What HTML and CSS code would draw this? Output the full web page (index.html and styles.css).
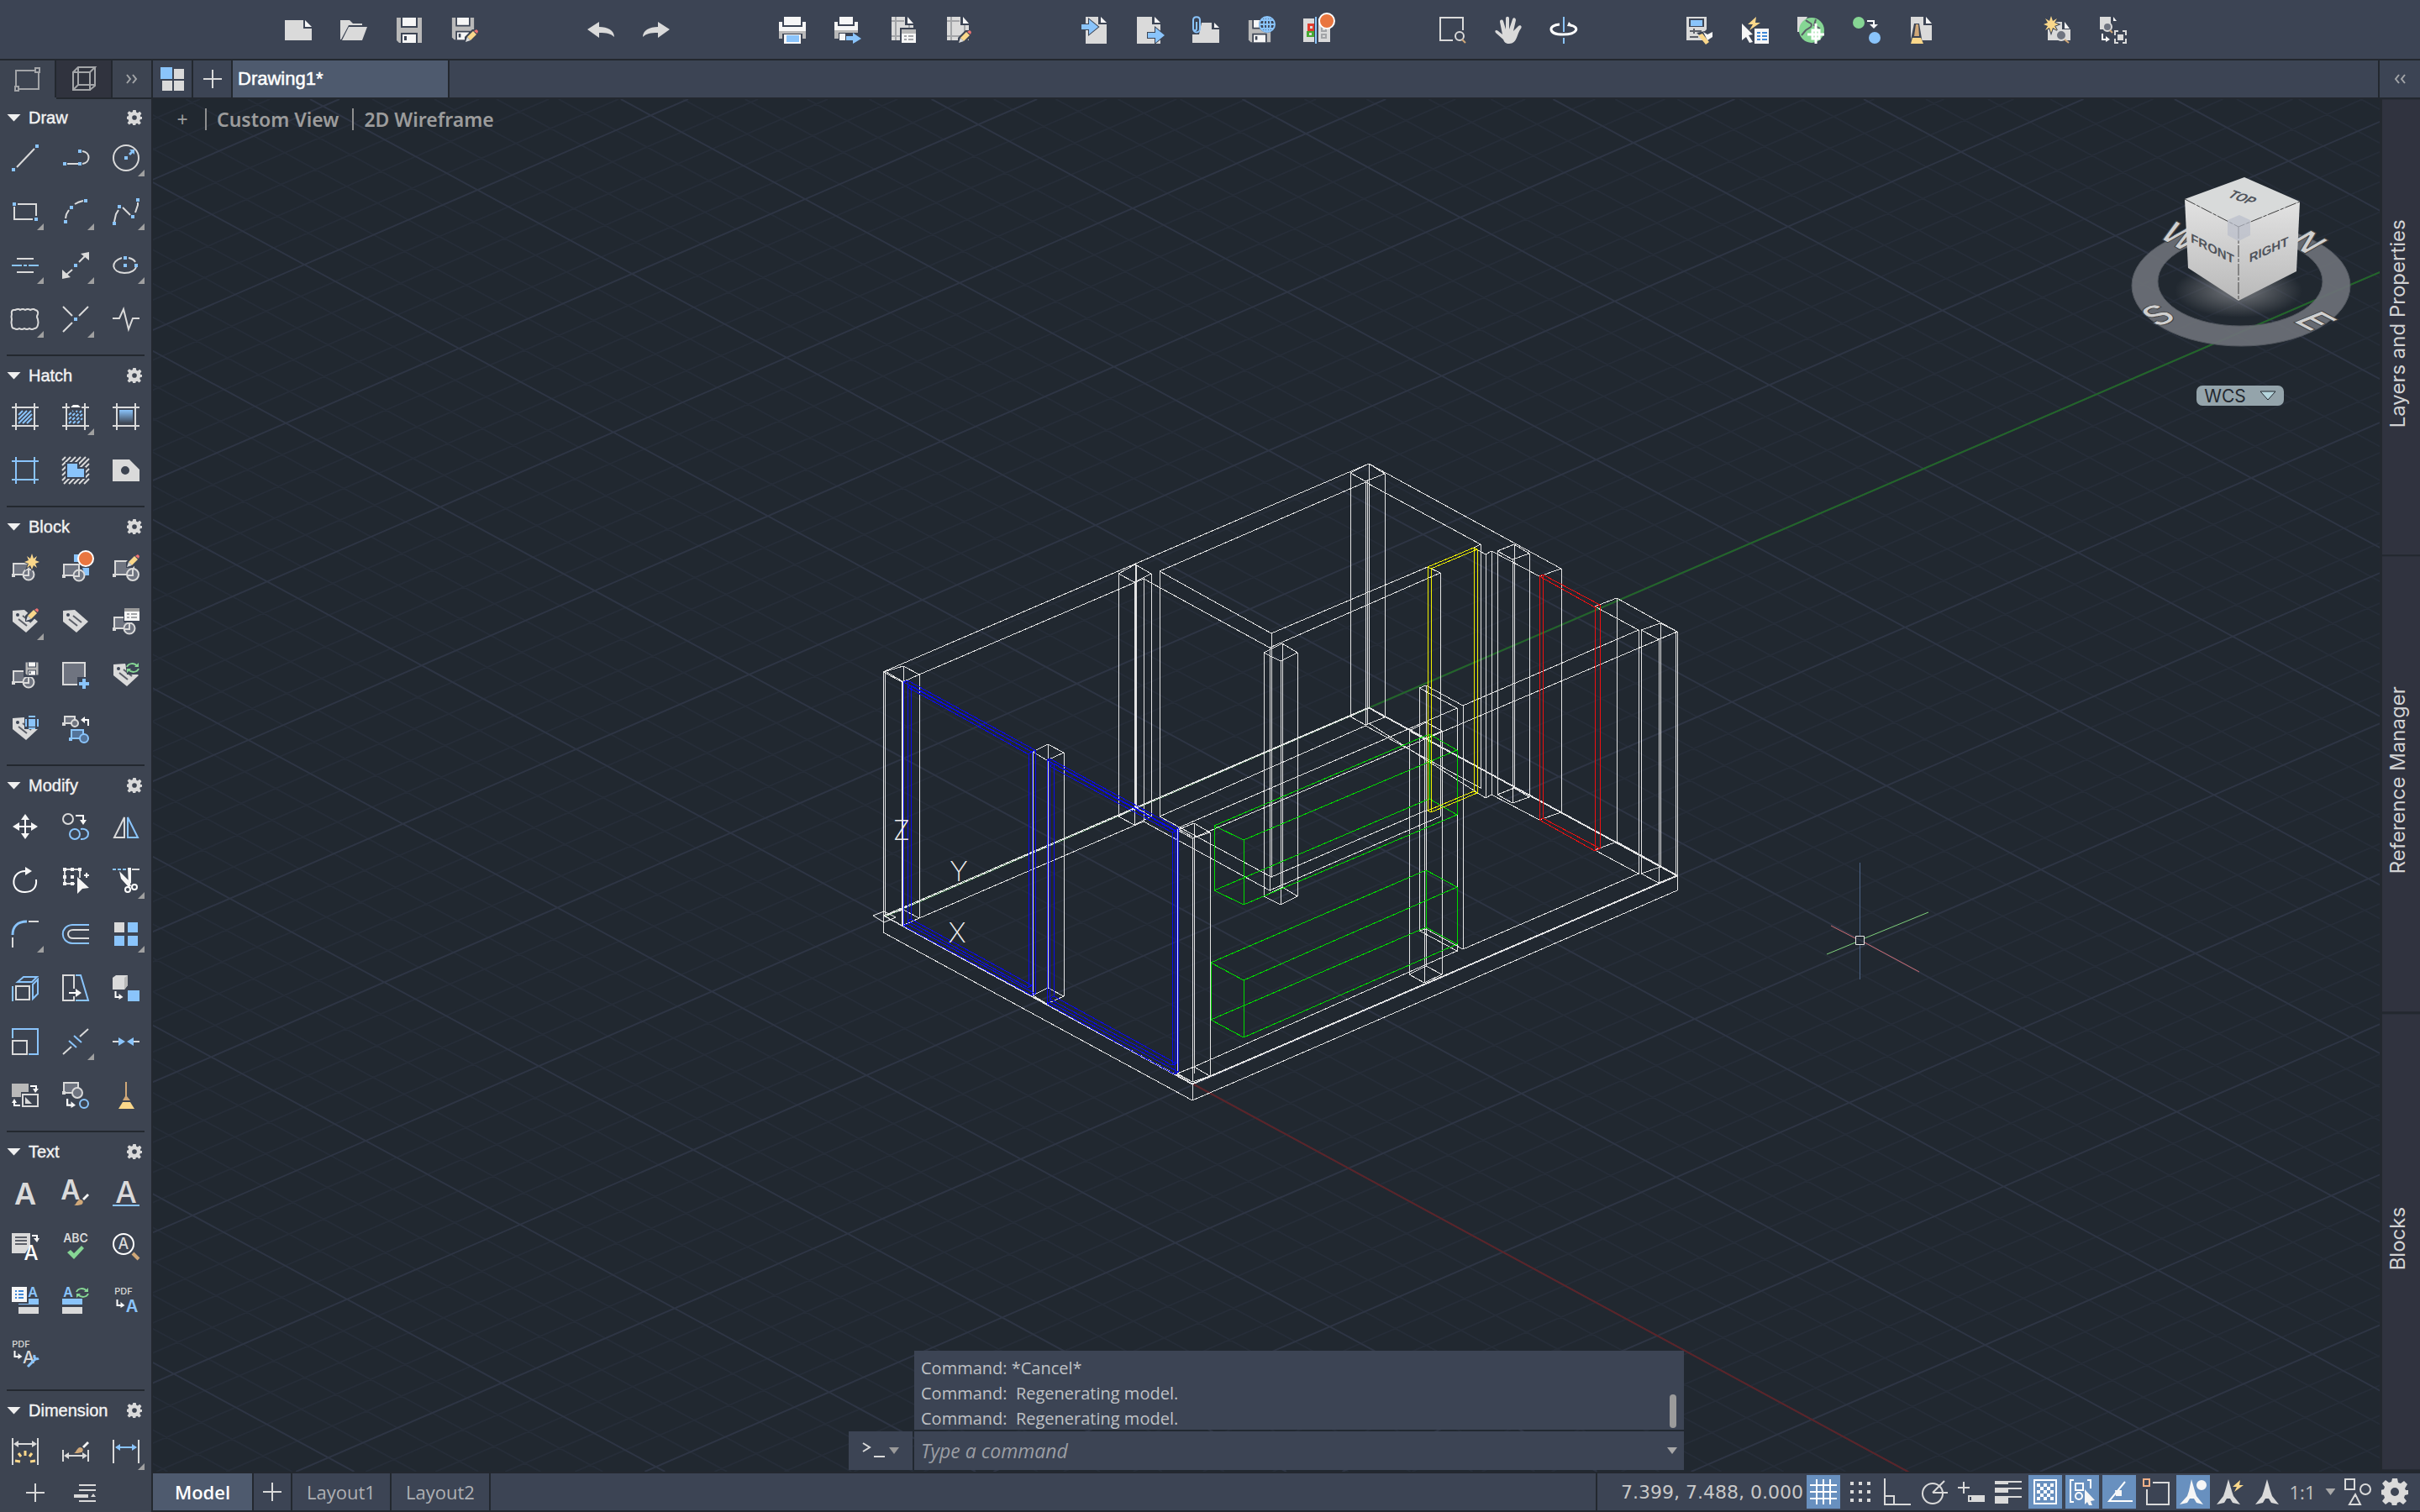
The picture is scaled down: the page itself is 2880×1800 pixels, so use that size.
FILE: index.html
```html
<!DOCTYPE html>
<html lang="en">
<head>
<meta charset="utf-8">
<title>Drawing1*</title>
<link rel="stylesheet" href="styles.css">
</head>
<body>
<svg class="defs" aria-hidden="true">
  <defs>
    <linearGradient id="gradFade" x1="0" y1="0" x2="0" y2="1"><stop offset="0" stop-color="#8ac4fb"/><stop offset="1" stop-color="#3d4451"/></linearGradient>
    <linearGradient id="faceFade" x1="0" y1="0" x2="0" y2="1"><stop offset="0" stop-color="#e2e2e2"/><stop offset="1" stop-color="#b9b9b9"/></linearGradient>
    <radialGradient id="glow"><stop offset="0" stop-color="#8a8c90" stop-opacity=".8"/><stop offset="1" stop-color="#8a8c90" stop-opacity="0"/></radialGradient>
    <symbol id="gear" viewBox="0 0 32 32"><path class="f" fill-rule="evenodd" d="M13 0h6l1 5 3 1 4-3 4 4-3 5 1 2 3 0v5l-4 1-1 3 3 4-4 4-4-3-3 1-1 4h-5l-1-4-3-1-4 3-4-4 3-4-1-3-4-1v-5l4-1 1-3-3-4 4-4 4 3 3-1zM16 11a5 5 0 1 0 0 10a5 5 0 1 0 0-10z"/></symbol>
    <symbol id="blk" viewBox="0 0 32 32"><path class="s fd" d="M2 11h18v13H2z"/><circle class="s fd" cx="20" cy="24" r="6.500"/><path class="s" d="M20 17v8h-6"/><path class="f" d="M0 23h4v4H0z"/></symbol>
    <symbol id="tag" viewBox="0 0 32 32"><path class="f" d="M1 3l14-1 16 14-14 13L1 16z"/><circle class="fk" cx="7" cy="8" r="2"/><path class="sk" d="M13 9l10 8M8 13l10 8"/></symbol>
    <symbol id="pencil" viewBox="0 0 16 16"><path class="fk" d="M0 17V9L10-1l5 1 2 6L7 17z"/><path class="fy" d="M3 9l7-7 4 4-7 7z"/><path class="f" d="M3 9l4 4-6 2z"/><path class="fr" d="M11 2l3-2 2 2-1 3z"/></symbol>
    <symbol id="floppy" viewBox="0 0 32 32"><path class="fg2" d="M1 1h30v30H4l-3-3z"/><path class="fk" d="M6 1h20v12H6zM6 19h20v12H6z"/><path class="fw" d="M8 1h16v10H8zM8 21h16v10H8z"/><path class="fk" d="M10 23h3v5h-3z"/></symbol>
    <symbol id="sheet" viewBox="0 0 32 32"><path class="f" d="M3 0h15v10h10v18H3z"/><path class="fw" d="M21 0l7 8h-7z"/></symbol>
    <symbol id="plan" viewBox="0 0 32 32"><path class="f" d="M2 0h16v10h10v18H2z"/><path class="fw" d="M21 0l7 8h-7z"/><path class="sg" d="M7 0v28M2 5h15M2 23h26M23 10v18"/></symbol>
    <symbol id="sync" viewBox="0 0 16 12"><path class="sgr" d="M1 5c2-5 9-5 12-1M15 7c-2 5-9 5-12 1"/><path class="fg" d="M15 0v5h-5zM1 12V7h5z"/></symbol>
    <symbol id="brush" viewBox="0 0 18 14"><path class="fw" d="M10 6l6-6 2 2-6 6z"/><path class="ft" d="M0 14c3-1 3-6 7-7 4 0 5 4 2 6-3 1-6 1-9 1z"/></symbol>
    <symbol id="corner" viewBox="0 0 10 10"><path class="sw" d="M1 0v7h5"/><path class="fw" d="M5 3l5 4-5 3z"/></symbol>
    <symbol id="needle" viewBox="0 0 32 32"><path class="f" d="M16 1l4 14 2 6 8 10-9-2-3-5h-4l-3 5-9 2 8-10 2-6z"/></symbol>
  </defs>
</svg>

<div class="app">
  <header class="toolbar" role="toolbar" aria-label="Standard">
    <div class="group">
      <button class="tool" aria-label="New"><svg class="icon" viewBox="0 0 32 32"><path class="f" d="M0 4h22v10h10v14H0z"/><path class="fw" d="M24 4l8 8h-8z"/></svg></button>
      <button class="tool" aria-label="Open"><svg class="icon" viewBox="0 0 32 32"><path class="f" d="M0 4h11l4 4h11v2H10L1 27H0z"/><path class="f" d="M10 12h22l-6 16H2z"/></svg></button>
      <button class="tool" aria-label="Save"><svg class="icon" viewBox="0 0 32 32"><use href="#floppy"/></svg></button>
      <button class="tool" aria-label="Save As"><svg class="icon" viewBox="0 0 32 32"><use href="#floppy" width="28" height="28"/><use href="#pencil" x="16" y="15" width="16" height="16"/></svg></button>
    </div>
    <div class="group">
      <button class="tool" aria-label="Undo"><svg class="icon" viewBox="0 0 32 32"><path class="f" d="M0 15L14 6v6c10 0 18 4 18 12-4-4-9-5-18-5v6z"/></svg></button>
      <button class="tool" aria-label="Redo"><svg class="icon" viewBox="0 0 32 32"><path class="f" d="M32 15L18 6v6C8 12 0 16 0 24c4-4 9-5 18-5v6z"/></svg></button>
    </div>
    <div class="group">
      <button class="tool" aria-label="Print"><svg class="icon" viewBox="0 0 32 32"><path class="fw" d="M6 0h20v10H6z"/><path class="fw" d="M0 6h4v6h24V6h4v11H0z"/><path class="fg2" d="M0 17h32v9h-4v-6H4v6H0z"/><path class="fw" d="M6 21h20v11H6z"/><path class="fb" d="M9 22h15v8H9z"/></svg></button>
      <button class="tool" aria-label="Export to PDF"><svg class="icon" viewBox="0 0 32 32"><path class="fw" d="M6 0h16v9H6zM0 6h4v5h20V6h4v10H0z"/><path class="fg2" d="M0 16h28v3H5v7H0z"/><path class="fw" d="M6 20h7v8H6z"/><path class="fb" d="M14 23h8v-4l10 7-10 6v-4h-8z"/></svg></button>
      <button class="tool" aria-label="Page Setup"><svg class="icon" viewBox="0 0 32 32"><use href="#plan"/><path class="fk" d="M12 13h20v19H12z"/><path class="fg2" d="M14 15h17v5H14z"/><path class="fw" d="M14 20h17v11H14z"/><path class="sg" d="M17 23h3M22 23h6M17 27h3M22 27h6"/></svg></button>
      <button class="tool" aria-label="Edit Layout"><svg class="icon" viewBox="0 0 32 32"><use href="#plan"/><use href="#pencil" x="15" y="16" width="16" height="16"/></svg></button>
    </div>
    <div class="group">
      <button class="tool" aria-label="Import"><svg class="icon" viewBox="0 0 32 32"><g transform="translate(2 0)"><path class="f" d="M3 0h15v9h10v23H3z"/><path class="fw" d="M21 0l7 7h-7z"/></g><path class="fb ko" d="M0 9h9V3l11 9-11 9v-6H0z"/></svg></button>
      <button class="tool" aria-label="Export"><svg class="icon" viewBox="0 0 32 32"><path class="f" d="M0 0h18v9h10v23H0z"/><path class="fw" d="M21 0l7 7h-7z"/><path class="fb ko" d="M13 19h9v-6l11 9-11 9v-6h-9z"/></svg></button>
      <button class="tool" aria-label="Attach"><svg class="icon" viewBox="0 0 32 32"><path class="f" d="M11 7h12v8h9v16H0V21h8z"/><path class="fw" d="M26 7l6 6h-6z"/><path class="sb" d="M5 6v8c0 3-4 3-4 0V4c0-5 8-5 8 0v10c0 6-8 6-8 0"/></svg></button>
      <button class="tool" aria-label="Save to Web"><svg class="icon" viewBox="0 0 32 32"><use href="#floppy" y="3" width="28" height="28"/><circle class="fk" cx="23" cy="9" r="10"/><path class="sb" d="M14 9a9 9 0 1 0 18 0a9 9 0 1 0-18 0zM14 9h18M23 0v18M16 4h14M16 14h14M19 9a4 9 0 1 0 8 0a4 9 0 1 0-8 0"/></svg></button>
      <button class="tool" aria-label="Compare Drawings"><svg class="icon" viewBox="0 0 32 32"><path class="f" d="M0 2h13v28H0zM18 2h6v8h8v20H18z"/><path class="fred" d="M5 8h8v9H5z"/><path class="fgreen" d="M4 17h9v7H4z"/><path class="f" d="M8 11h3v3H8zM7 19h3v3H7z"/><path class="sg" d="M22 13h5v4h-5zM22 21h5v4h-5z"/><path class="sb" d="M15 0v32"/></svg><span class="badge"></span></button>
    </div>
    <div class="group">
      <button class="tool" aria-label="Zoom Window"><svg class="icon" viewBox="0 0 32 32"><path class="s" d="M16 28H1V1h27v15"/><circle class="s" cx="24" cy="23" r="5"/><path class="st" d="M27 27l4 4"/></svg></button>
      <button class="tool" aria-label="Pan"><svg class="icon" viewBox="0 0 32 32"><path class="f" d="M10 27L1 19c-2-3 1-4 3-2l5 4L6 6c0-3 3-3 4-1l3 10V2c0-3 4-3 4 0v13l4-12c1-3 4-2 4 1l-3 13 6-6c2-2 5 0 3 3-5 6-4 18-14 18-4 0-6-2-7-5z"/></svg></button>
      <button class="tool" aria-label="Orbit"><svg class="icon" viewBox="0 0 32 32"><path class="sb" d="M16 0v18M16 25v7"/><path class="sw3" d="M11 9C-3 10-3 21 15 21C33 21 35 12 24 10"/><path class="fw" d="M20 11l2-5 6 6z"/></svg></button>
    </div>
    <div class="group">
      <button class="tool" aria-label="Quick Measure"><svg class="icon" viewBox="0 0 32 32"><path class="f" d="M0 0h24v28H0z"/><path class="fk" d="M3 2h18v10H3z"/><path class="fb" d="M5 4h14v7H5z"/><path class="sk" d="M4 17h14M4 24h10M9 14v6"/><path class="fk" d="M12 19l10-2 2-2 8 2v12l-6 3z"/><path class="fy" d="M14 22l5-2 8 10-4 3z"/><path class="fw" d="M20 18l5 3 6-3v6l-6 4z"/></svg></button>
      <button class="tool" aria-label="Quick Select"><svg class="icon" viewBox="0 0 32 32"><path class="fy" d="M17 0L7 9h6l-4 7 13-9h-6z"/><path class="fw" d="M0 8l13 13-5 1 5 8-4 1-4-7-5 4z"/><path class="fw" d="M15 14h17v18H15z"/><path class="sblu" d="M18 19h4M24 19h6M18 23h4M24 23h6M18 27h4M24 27h6"/></svg></button>
      <button class="tool" aria-label="Geolocation"><svg class="icon" viewBox="0 0 32 32"><path class="f" d="M0 0h12L2 18H0z"/><circle class="fg" cx="17" cy="16" r="15"/><path class="sk" d="M10 4c4 4 9 3 6 8l-6 4-5 6M22 3l-2 7 7 4"/><path class="sw3" d="M22 8v24M12 21h20M18 16v10h8V16z"/></svg></button>
      <button class="tool" aria-label="Convert"><svg class="icon" viewBox="0 0 32 32"><circle class="fg" cx="7" cy="7" r="7"/><circle class="fb" cx="26" cy="25" r="7"/><path class="sw" d="M17 5h8v6"/><path class="fw" d="M20 9h10l-5 5z"/></svg></button>
      <button class="tool" aria-label="Purge"><svg class="icon" viewBox="0 0 32 32"><use href="#sheet"/><path class="fk" d="M7 8h6l4 24H2z"/><path class="ft" d="M9 9h3l1 14H7z"/><path class="fy" d="M5 25h10l3 7H3z"/></svg></button>
    </div>
    <div class="group">
      <button class="tool" aria-label="Find New"><svg class="icon" viewBox="0 0 32 32"><path class="f" d="M4 6h17v9h10v13H4z"/><path class="fw" d="M24 6l6 8h-6z"/><path class="fy ko" d="M8-1l2 6 5-3-3 5 5 2-5 2 3 5-5-3-2 6-2-6-5 3 3-5-5-2 5-2-3-5 5 3z"/><circle class="s fd" cx="20" cy="22" r="6"/><path class="st" d="M24 27l5 4"/></svg></button>
      <button class="tool" aria-label="Find Blocks"><svg class="icon" viewBox="0 0 32 32"><path class="f" d="M0 0h13v15H0z"/><path class="fw" d="M16 0l4 5h-4z"/><circle class="s fd" cx="9" cy="12" r="5"/><path class="st" d="M12 16l3 3"/><use href="#corner" x="2" y="20" width="10" height="10"/><path class="s" d="M18 22v-5h4M27 17h4v5M31 26v5h-4M22 31h-4v-5"/><path class="f" d="M21 21h7v7h-7z"/></svg></button>
    </div>
  </header>

  <aside class="palette">
    <div class="palette-tabs">
      <button class="ptab" aria-label="Drafting"><svg class="icon" viewBox="0 0 32 32"><path class="sg" d="M2 25V6h24M29 8v20H5"/><path class="sg" d="M25 3h5v5h-5zM1 25h4v5H1z"/></svg></button>
      <button class="ptab dark" aria-label="Modeling"><svg class="icon" viewBox="0 0 32 32"><path class="sg" d="M3 8h20v21H3zM3 8l6-6h20l-6 6M29 2v22l-6 5M9 2v21M9 23h20M9 23l-6 6"/></svg></button>
      <button class="ptab narrow" aria-label="More"><svg class="chev" viewBox="0 0 14 12"><path class="sg" d="M1 1l4 5-4 5M8 1l4 5-4 5"/></svg></button>
    </div>
    <div class="sections">
      <section class="section">
        <h2 class="head"><button class="fold"><span class="tri"></span>Draw</button><button class="cog" aria-label="Draw options"><svg viewBox="0 0 32 32"><use href="#gear"/></svg></button></h2>
        <div class="grid">
          <button class="tool" aria-label="Line"><svg class="icon" viewBox="0 0 32 32"><path class="s" d="M6 27L27 5"/><path class="fb" d="M0 28h4v4H0zM28 0h4v4h-4z"/></svg></button>
          <button class="tool" aria-label="Polyline"><svg class="icon" viewBox="0 0 32 32"><path class="s" d="M6 23h13M24 8c10 1 10 14 0 15"/><path class="fb" d="M1 21h4v4H1zM19 21h4v4h-4zM19 6h4v4h-4z"/></svg></button>
          <button class="tool fly" aria-label="Circle"><svg class="icon" viewBox="0 0 32 32"><circle class="s" cx="16" cy="16" r="15"/><path class="fb" d="M14 14h4v4h-4zM20 6h6v6l-2-2-3 3-2-2 3-3z"/></svg></button>
          <button class="tool fly" aria-label="Rectangle"><svg class="icon" viewBox="0 0 32 32"><path class="s" d="M7 7h22v14M25 25H3V10"/><path class="fb" d="M1 5h4v4H1zM27 23h4v4h-4z"/></svg></button>
          <button class="tool fly" aria-label="Arc"><svg class="icon" viewBox="0 0 32 32"><path class="s" d="M4 24l1-5 3-5M15 7c3-2 6-3 10-4"/><path class="fb" d="M2 26h4v4H2zM9 9h4v4H9zM26 1h4v4h-4z"/></svg></button>
          <button class="tool fly" aria-label="Spline"><svg class="icon" viewBox="0 0 32 32"><path class="s" d="M2 28l2-9 3-5M12 11l9 9M27 17l3-9V5"/><path class="fb" d="M0 28h4v4H0zM6 8h4v4H6zM22 20h4v4h-4zM28 0h4v4h-4z"/></svg></button>
          <button class="tool fly" aria-label="Multiline"><svg class="icon" viewBox="0 0 32 32"><path class="s" d="M6 8h20M6 24h20"/><path class="sb" d="M0 16h12M14 16h4M20 16h12"/></svg></button>
          <button class="tool fly" aria-label="Construction Line"><svg class="icon" viewBox="0 0 32 32"><path class="s" d="M5 27l7-6M20 12l7-7"/><path class="f" d="M0 32V21l10 9zM32 0v10L22 2z"/><path class="fb" d="M14 14h4v4h-4z"/></svg></button>
          <button class="tool fly" aria-label="Ellipse"><svg class="icon" viewBox="0 0 32 32"><path class="s" d="M11 7C-3 11-2 24 14 25c9 0 13-4 14-7M19 7c5 1 7 3 8 5"/><path class="fb" d="M13 5h4v4h-4zM13 14h4v4h-4zM26 14h4v4h-4z"/></svg></button>
          <button class="tool fly" aria-label="Revision Cloud"><svg class="icon" viewBox="0 0 32 32"><path class="s" d="M4 5q4-2 6 0 3-2 6 0 3-2 6 0 4-2 6 0q4 1 3 5-2 3 0 6 1 4 0 7-1 4-4 4-3 2-6 0-3 2-6 0-3 2-6 0-3 2-6 0-3 0-3-4-1-3 0-7-1-3 0-6-1-4 2-5z"/></svg></button>
          <button class="tool fly" aria-label="Point"><svg class="icon" viewBox="0 0 32 32"><path class="s" d="M1 1l11 11M31 1L20 12M12 20L1 31"/><path class="fb" d="M14 14h4v4h-4z"/></svg></button>
          <button class="tool" aria-label="Break Line"><svg class="icon" viewBox="0 0 32 32"><path class="s" d="M0 15h8l5-11 6 24 5-13h8"/></svg></button>
        </div>
      </section>
      <section class="section">
        <h2 class="head"><button class="fold"><span class="tri"></span>Hatch</button><button class="cog" aria-label="Hatch options"><svg viewBox="0 0 32 32"><use href="#gear"/></svg></button></h2>
        <div class="grid">
          <button class="tool" aria-label="Hatch"><svg class="icon" viewBox="0 0 32 32"><path class="s" d="M0 5h32M0 27h32M5 0v32M27 0v32"/><path class="sb" d="M8 14l5-5M8 19L18 9M8 24L23 9M13 24l11-11M18 24l6-6"/></svg></button>
          <button class="tool fly" aria-label="Edit Hatch"><svg class="icon" viewBox="0 0 32 32"><path class="s" d="M0 5h9M23 5h9M0 27h32M5 0v32M27 0v32"/><path class="sb" stroke-dasharray="4 2" d="M8 14l5-5M8 19L18 9M8 24L23 9M13 24l11-11M18 24l6-6"/><path class="fw" d="M10 5l3-3h6l3 3z"/></svg></button>
          <button class="tool" aria-label="Gradient"><svg class="icon" viewBox="0 0 32 32"><path class="s" d="M0 5h32M0 27h32M5 0v32M27 0v32"/><path fill="url(#gradFade)" d="M8 8h16v16H8z"/></svg></button>
          <button class="tool" aria-label="Boundary"><svg class="icon" viewBox="0 0 32 32"><path class="sb" d="M0 5h32M0 27h32M5 0v32M27 0v32"/></svg></button>
          <button class="tool" aria-label="Wipeout"><svg class="icon" viewBox="0 0 32 32"><path class="s" d="M0 4l4-4M0 10L10 0M0 16L16 0M0 22L22 0M0 28L28 0M2 32L32 2M8 32L32 8M14 32l18-18M20 32l12-12M26 32l6-6"/><path class="fk" d="M4 6h16v6h8v14H4z"/><path class="fb" d="M6 8h12v6h8v10H6z"/></svg></button>
          <button class="tool" aria-label="Region"><svg class="icon" viewBox="0 0 32 32"><path class="f" fill-rule="evenodd" d="M0 3h20l12 12v14H0zM15 11a5 5 0 1 0 0 10a5 5 0 1 0 0-10z"/></svg></button>
        </div>
      </section>
      <section class="section">
        <h2 class="head"><button class="fold"><span class="tri"></span>Block</button><button class="cog" aria-label="Block options"><svg viewBox="0 0 32 32"><use href="#gear"/></svg></button></h2>
        <div class="grid">
          <button class="tool" aria-label="Create Block"><svg class="icon" viewBox="0 0 32 32"><use href="#blk"/><path class="fy ko" d="M24-1l2 6 4-3-2 5 5 2-5 2 2 5-4-3-2 5-2-5-4 3 2-5-5-2 5-2-2-5 4 3z"/></svg></button>
          <button class="tool" aria-label="Insert Block"><svg class="icon" viewBox="0 0 32 32"><path class="fb" d="M14 0h10v9H14zM24 16h8v9h-5z"/><use href="#blk" y="1"/></svg><span class="badge"></span></button>
          <button class="tool" aria-label="Edit Block"><svg class="icon" viewBox="0 0 32 32"><path class="s fd" d="M3 8h22v16H3z"/><circle class="s fd" cx="24" cy="24" r="7"/><path class="s" d="M24 17v8h-6"/><path class="f" d="M0 23h4v4H0z"/><use href="#pencil" x="16" y="0" width="16" height="16"/></svg></button>
          <button class="tool fly" aria-label="Edit Attributes"><svg class="icon" viewBox="0 0 32 32"><use href="#tag"/><use href="#pencil" x="16" y="0" width="16" height="16"/></svg></button>
          <button class="tool" aria-label="Define Attributes"><svg class="icon" viewBox="0 0 32 32"><use href="#tag"/></svg></button>
          <button class="tool" aria-label="Manage Attributes"><svg class="icon" viewBox="0 0 32 32"><use href="#blk"/><path class="fk" d="M13 0h19v17H13z"/><path class="fg3" d="M14 0h18v4H14z"/><path class="fw" d="M14 4h18v11H14z"/><path class="sg" d="M17 7h3M22 7h7M17 11h3M22 11h7"/></svg></button>
          <button class="tool" aria-label="Write Block"><svg class="icon" viewBox="0 0 32 32"><use href="#blk"/><path class="fk" d="M14-1h18v19H14z"/><use href="#floppy" x="16" y="0" width="16" height="16"/></svg></button>
          <button class="tool" aria-label="Base Point"><svg class="icon" viewBox="0 0 32 32"><path class="s fd" d="M1 1h26v26H1z"/><path class="fk" d="M18 18h16v16H18z"/><path class="fb" d="M24 20h4v4h4v4h-4v4h-4v-4h-4v-4h4z"/></svg></button>
          <button class="tool" aria-label="Sync Attributes"><svg class="icon" viewBox="0 0 32 32"><use href="#tag"/><path class="fk" d="M15 0h17v15H17z"/><use href="#sync" x="16" y="1" width="16" height="12"/></svg></button>
          <button class="tool" aria-label="Attribute Display"><svg class="icon" viewBox="0 0 32 32"><use href="#tag"/><path class="fk" d="M15-1h17v17H15z"/><path class="fb" d="M20 4h8v9h-8z"/><path class="sb" d="M20 1h8M20 15h8M17 4v9M31 4v9"/></svg></button>
          <button class="tool" aria-label="Replace Block"><svg class="icon" viewBox="0 0 32 32"><path class="s fd" d="M3 1h12v8H3z"/><circle class="s fd" cx="15" cy="9" r="4"/><path class="f" d="M0 8h4v4H0z"/><path class="sb fdb" d="M11 17h14v10H11z"/><circle class="sb fdb" cx="26" cy="27" r="5"/><path class="fb" d="M8 26h4v4H8z"/><path class="sw" d="M31 12V5h-6"/><path class="fw" d="M27 1v8l-5-4z"/></svg></button>
        </div>
      </section>
      <section class="section">
        <h2 class="head"><button class="fold"><span class="tri"></span>Modify</button><button class="cog" aria-label="Modify options"><svg viewBox="0 0 32 32"><use href="#gear"/></svg></button></h2>
        <div class="grid">
          <button class="tool" aria-label="Move"><svg class="icon" viewBox="0 0 32 32"><path class="sw" d="M16 6v20M6 16h20"/><path class="fw" d="M16 1l5 7H11zM16 31l5-7H11zM1 16l8-5v10zM31 16l-8-5v10z"/></svg></button>
          <button class="tool" aria-label="Copy"><svg class="icon" viewBox="0 0 32 32"><circle class="s" cx="7" cy="7" r="6"/><path class="sw" d="M16 3h9v6"/><path class="fw" d="M21 8h8l-4 6z"/><circle class="sb" cx="15" cy="25" r="6"/><path class="sb" d="M22 19c12-2 12 13 0 12"/></svg></button>
          <button class="tool" aria-label="Mirror"><svg class="icon" viewBox="0 0 32 32"><path class="s" d="M14 5v24H2z"/><path class="sb" d="M18 5v24h12z"/></svg></button>
          <button class="tool" aria-label="Rotate"><svg class="icon" viewBox="0 0 32 32"><path class="sw" d="M18 5C-2 3-3 31 16 30c10 0 14-7 13-15"/><path class="fw" d="M16 0l8 5-8 5z"/></svg></button>
          <button class="tool" aria-label="Stretch"><svg class="icon" viewBox="0 0 32 32"><path class="s" d="M3 3h18v10M15 20H3V3"/><path class="fw" d="M1 1h4v4H1zM10 1h4v4h-4zM19 1h4v4h-4zM1 10h4v4H1zM1 18h4v4H1zM10 10h4v4h-4zM10 18h4v4h-4zM18 12l14 13-8 1-6 6zM26 9h6v2h-6zM28 7h2v6h-2z"/></svg></button>
          <button class="tool fly" aria-label="Trim"><svg class="icon" viewBox="0 0 32 32"><path class="sb" stroke-dasharray="4 2" d="M0 3h16"/><path class="s" d="M23 3h9"/><path class="fw" d="M8 5l12 12 2 6-3 1-9-10zM18 1l4 0v18l-3 3z"/><circle class="sw" cx="18" cy="27" r="3"/><circle class="sw" cx="26" cy="24" r="3"/></svg></button>
          <button class="tool fly" aria-label="Fillet"><svg class="icon" viewBox="0 0 32 32"><path class="s" d="M20 1h12M1 20v12"/><path class="sb3" d="M1 17C1 7 7 1 18 1"/></svg></button>
          <button class="tool" aria-label="Offset"><svg class="icon" viewBox="0 0 32 32"><path class="sb" d="M32 5H12C-3 6-3 26 12 27h20"/><path class="s" d="M32 11H13c-8 0-8 10 0 10h19"/></svg></button>
          <button class="tool fly" aria-label="Array"><svg class="icon" viewBox="0 0 32 32"><path class="f" d="M2 2h12v12H2z"/><path class="fb" d="M18 2h12v12H18zM2 18h12v12H2zM18 18h12v12H18z"/></svg></button>
          <button class="tool" aria-label="Presspull"><svg class="icon" viewBox="0 0 32 32"><path class="s" d="M5 14h16v16H5z"/><path class="sb" d="M1 14v18M7 9l7-6h16l-6 6zM25 12l6-6v17l-6 6z"/></svg></button>
          <button class="tool" aria-label="Extrude Edge"><svg class="icon" viewBox="0 0 32 32"><path class="s" d="M14 17V1H1v30h13v-5"/><path class="sb" d="M16 1h6l9 30H16"/><path class="sw" d="M8 22h9"/><path class="fw" d="M16 17l7 5-7 5z"/></svg></button>
          <button class="tool" aria-label="Flatten"><svg class="icon" viewBox="0 0 32 32"><path class="f" d="M0 4l4-3h14v12l-4 5H0z"/><path class="fg2" d="M14 4l4-3v12l-4 5z"/><use href="#corner" x="2" y="20" width="11" height="10"/><path class="fb" d="M18 19h14v13H18z"/></svg></button>
          <button class="tool" aria-label="Scale"><svg class="icon" viewBox="0 0 32 32"><path class="s" d="M1 15h17v16H1z"/><path class="sb" d="M1 12V1h30v30H20"/></svg></button>
          <button class="tool fly" aria-label="Break"><svg class="icon" viewBox="0 0 32 32"><path class="s" d="M1 31l10-9M21 10l10-9"/><path class="sb" d="M8 15l9 8M14 9l9 8"/></svg></button>
          <button class="tool" aria-label="Join"><svg class="icon" viewBox="0 0 32 32"><path class="s" d="M0 16h8M24 16h8"/><path class="fb" d="M7 11l8 5-8 5zM25 11l-8 5 8 5z"/></svg></button>
          <button class="tool" aria-label="Change Space"><svg class="icon" viewBox="0 0 32 32"><path class="fg2" d="M0 2h20v10h-9v6H0z"/><path class="s" d="M13 15h18v14H13z"/><path class="f" d="M16 18l8 8h-8z"/><path class="sw" d="M22 5h7v4M3 24v4h7"/><path class="fw" d="M25 8h7l-4 5zM0 25h6l-3-5z"/></svg></button>
          <button class="tool" aria-label="Explode"><svg class="icon" viewBox="0 0 32 32"><path class="s fd" d="M2 1h17v12H2z"/><circle class="s fd" cx="18" cy="13" r="6"/><path class="f" d="M0 11h4v4H0z"/><use href="#corner" x="4" y="20" width="13" height="11"/><circle class="sb" cx="26" cy="26" r="5"/></svg></button>
          <button class="tool" aria-label="Clean"><svg class="icon" viewBox="0 0 32 32"><path class="ft" d="M15 0h2v17l4 5H12l3-5z"/><path class="fy" d="M12 24h9l5 8H7z"/></svg></button>
        </div>
      </section>
      <section class="section">
        <h2 class="head"><button class="fold"><span class="tri"></span>Text</button><button class="cog" aria-label="Text options"><svg viewBox="0 0 32 32"><use href="#gear"/></svg></button></h2>
        <div class="grid">
          <button class="tool" aria-label="Multiline Text"><svg class="icon" viewBox="0 0 32 32"><text class="glyph bold" x="16" y="30" font-size="36">A</text></svg></button>
          <button class="tool" aria-label="Text Style"><svg class="icon" viewBox="0 0 32 32"><text class="glyph bold" x="10" y="24" font-size="32">A</text><use href="#brush" x="14" y="17" width="18" height="14"/></svg></button>
          <button class="tool" aria-label="Single Line Text"><svg class="icon" viewBox="0 0 32 32"><text class="glyph" x="16" y="28" font-size="36">A</text><path class="sb" d="M0 31h32"/></svg></button>
          <button class="tool" aria-label="Convert to Mtext"><svg class="icon" viewBox="0 0 32 32"><path class="f" d="M0 0h22v15l-6 9H0z"/><path class="sk" d="M4 5h14M4 9h14M4 13h14"/><path class="sw" d="M24 3h6v4"/><path class="fw" d="M26 6h7l-3 5z"/><text class="glyph white" x="23" y="32" font-size="24">A</text></svg></button>
          <button class="tool" aria-label="Spell Check"><svg class="icon" viewBox="0 0 32 32"><text class="glyph bold" x="16" y="11" font-size="14">ABC</text><path class="fg" d="M6 23l4-3 4 4 9-9 3 3-12 13z"/></svg></button>
          <button class="tool" aria-label="Find Text"><svg class="icon" viewBox="0 0 32 32"><circle class="sw" cx="13" cy="13" r="12"/><text class="glyph" x="13" y="19" font-size="18">A</text><path class="st3" d="M24 24l7 7"/></svg></button>
          <button class="tool" aria-label="Field"><svg class="icon" viewBox="0 0 32 32"><path class="fw" d="M0 0h18v18H0z"/><path class="sblu" d="M4 5h2M8 5h6M4 9h2M8 9h6M4 13h2M8 13h6"/><text class="glyph blue" x="25" y="12" font-size="16">A</text><path class="fb" d="M20 14h12v7H8v-1h12z"/><path class="f" d="M8 24h24v8H8z"/></svg></button>
          <button class="tool" aria-label="Update Field"><svg class="icon" viewBox="0 0 32 32"><text class="glyph blue" x="7" y="12" font-size="16">A</text><use href="#sync" x="16" y="1" width="16" height="12"/><path class="fb" d="M0 14h24v7H0z"/><path class="f" d="M0 24h24v8H0z"/></svg></button>
          <button class="tool" aria-label="Recognize PDF Text"><svg class="icon" viewBox="0 0 32 32"><text class="glyph" x="13" y="9" font-size="11">PDF</text><use href="#corner" x="4" y="15" width="11" height="10"/><text class="glyph blue" x="23" y="30" font-size="20">A</text></svg></button>
          <button class="tool" aria-label="PDF Text Settings"><svg class="icon" viewBox="0 0 32 32"><text class="glyph" x="11" y="8" font-size="11">PDF</text><use href="#corner" x="2" y="12" width="11" height="10"/><text class="glyph" x="20" y="27" font-size="20">A</text><path class="sb3" d="M19 31l9-9"/><path class="sb3" d="M27 17c-1 4 2 6 5 4"/></svg></button>
        </div>
      </section>
      <section class="section">
        <h2 class="head"><button class="fold"><span class="tri"></span>Dimension</button><button class="cog" aria-label="Dimension options"><svg viewBox="0 0 32 32"><use href="#gear"/></svg></button></h2>
        <div class="grid">
          <button class="tool" aria-label="Auto Dimension"><svg class="icon" viewBox="0 0 32 32"><path class="s" d="M1 0v32M31 0v32M4 7h24"/><path class="f" d="M2 7l6-4v8zM30 7l-6-4v8z"/><path class="sy" d="M16 15v6M8 18l3 4M24 18l-3 4M4 27l6 1M28 27l-6 1"/></svg></button>
          <button class="tool" aria-label="Dimension Style"><svg class="icon" viewBox="0 0 32 32"><path class="s" d="M1 14v14M31 14v14M4 21h24"/><path class="f" d="M2 21l6-4v8zM30 21l-6-4v8z"/><use href="#brush" x="14" y="4" width="18" height="14"/></svg></button>
          <button class="tool fly" aria-label="Linear Dimension"><svg class="icon" viewBox="0 0 32 32"><path class="s" d="M1 2v28M31 2v28"/><path class="sb" d="M4 11h24"/><path class="fb" d="M3 11l6-4v8zM29 11l-6-4v8z"/></svg></button>
        </div>
      </section>
    </div>
    <div class="palette-foot">
      <button class="tool" aria-label="Add group"><svg class="plus" viewBox="0 0 22 22"><path class="s" d="M11 0v22M0 11h22"/></svg></button>
      <button class="tool" aria-label="Customize"><svg class="icon" viewBox="0 0 32 32"><path class="s" d="M8 7h20M8 13h20M8 26h20"/><path class="f" d="M2 18h17v4H2zM22 21l3-4 3 4z"/></svg></button>
    </div>
  </aside>

  <main class="main">
    <nav class="filetabs">
      <button class="ftab home" aria-label="Start"><svg class="icon" viewBox="0 0 32 32"><path class="fb" d="M2 2h14v14H2z"/><path class="f" d="M18 4h12v12H18zM4 18h12v12H4zM18 18h12v12H18z"/></svg></button>
      <button class="ftab add" aria-label="New drawing"><svg class="plus" viewBox="0 0 22 22"><path class="s" d="M11 0v22M0 11h22"/></svg></button>
      <button class="ftab doc">Drawing1*</button>
      <div class="rest"></div>
      <button class="ftab collapse" aria-label="Collapse"><svg class="chev" viewBox="0 0 14 12"><path class="sg" d="M6 1L2 6l4 5M13 1L9 6l4 5"/></svg></button>
    </nav>

    <div class="work">
      <div class="canvas">
        <svg class="scene" viewBox="182 118 2652 1634" preserveAspectRatio="xMidYMid slice" role="img" aria-label="Wireframe model">
          <g id="lattice"></g>
          <path class="axis-y" d="M1054 1091L2854 315"/>
          <path class="axis-x" d="M1420 1290L2290 1762"/>
          <g id="model"></g>
          <g class="ucs">
            <path d="M1040 1090l13-5 14 7-14 6z"/>
            <text x="1074" y="1000">Z</text><text x="1142" y="1049">Y</text><text x="1140" y="1122">X</text>
          </g>
          <g class="cursor">
            <path stroke="#4c6487" d="M2214.500 1027v87M2214.500 1125v41"/>
            <path stroke="#7fd07c" d="M2175 1136l34-14M2220 1117l76-31"/>
            <path stroke="#c96a70" d="M2180 1102l29 15M2220 1122l65 35"/>
            <path stroke="#e8e8e8" d="M2209.500 1114.500h10v10h-10z"/>
          </g>
        </svg>

        <div class="viewlabel">
          <button class="vbtn">+</button><button class="vbtn bar">Custom View</button><button class="vbtn bar">2D Wireframe</button>
        </div>

        <div class="viewcube">
          <svg viewBox="0 0 270 220" role="img" aria-label="View cube">
            <path class="ring" fill-rule="evenodd" d="M6 134a130 72 0 1 0 260 0a130 72 0 1 0-260 0zM37 129a98 53 0 1 1 196 0a98 53 0 1 1-196 0z"/>
            <ellipse cx="133" cy="140" rx="76" ry="32" fill="url(#glow)"/>
            <text class="compass" transform="translate(64 76) rotate(30) skewX(-20)">W</text>
            <text class="compass" transform="translate(216 82) rotate(30) skewX(-30)">N</text>
            <text class="compass" transform="translate(37 169) rotate(-24) skewX(26)">S</text>
            <text class="compass" transform="translate(225 176) rotate(28) skewX(-40)">E</text>
            <path class="top" d="M69 31L140 5l66 29-73 30z"/>
            <path fill="url(#faceFade)" d="M69 31l64 33v88l-60-39z"/>
            <path fill="url(#faceFade)" d="M133 64l73-30-4 83-69 35z"/>
            <path class="edge" d="M69 31l64 33 73-30M133 64v88"/>
            <path class="hot" d="M120 56l14-6 13 6v18l-14 7-13-7z"/>
            <text class="facetext" transform="translate(138 29) rotate(20) skewX(-28)">TOP</text>
            <text class="facetext" transform="translate(102 90) skewY(27)">FRONT</text>
            <text class="facetext" transform="translate(169 91) skewY(-24)">RIGHT</text>
          </svg>
          <button class="wcs">WCS<svg viewBox="0 0 20 12"><path d="M1 1h18l-9 10z"/></svg></button>
        </div>

        <div class="command">
          <div class="log"><p>Command: *Cancel*</p><p>Command:&nbsp; Regenerating model.</p><p>Command:&nbsp; Regenerating model.</p><span class="thumb"></span></div>
          <button class="prompt" aria-label="Recent commands"><svg viewBox="0 0 44 24"><path class="s" d="M1 3l8 5-8 5M14 19h13"/><path class="fg3" d="M32 8h12l-6 8z"/></svg></button>
          <div class="entry"><input type="text" aria-label="Command" placeholder="Type a command"><span class="caret"></span></div>
        </div>
      </div>
      <aside class="dock">
        <button class="docktab">Layers and Properties</button>
        <button class="docktab">Reference Manager</button>
        <button class="docktab">Blocks</button>
      </aside>
    </div>

    <footer class="status">
      <button class="ltab on">Model</button>
      <button class="ltab add" aria-label="New layout"><svg class="plus" viewBox="0 0 22 22"><path class="s" d="M11 0v22M0 11h22"/></svg></button>
      <button class="ltab">Layout1</button>
      <button class="ltab">Layout2</button>
      <div class="rest"></div>
      <div class="modes">
        <span class="coords">7.399, 7.488, 0.000</span>
        <button class="mode on" aria-label="Grid"><svg class="icon" viewBox="0 0 32 32"><path class="sw" d="M0 8h32M0 16h32M0 24h32M8 1v30M16 1v30M24 1v30"/></svg></button>
        <button class="mode" aria-label="Snap"><svg class="icon" viewBox="0 0 32 32"><path class="dots" d="M4 6h24M4 16h24M4 26h24"/></svg></button>
        <button class="mode" aria-label="Ortho"><svg class="icon" viewBox="0 0 32 32"><path class="s" d="M1 0v31h31M1 21h11v10"/></svg></button>
        <button class="mode" aria-label="Polar"><svg class="icon" viewBox="0 0 32 32"><circle class="s" cx="14" cy="18" r="12"/><path class="s" d="M14 17L28 3M14 17h18"/></svg></button>
        <button class="mode" aria-label="Dynamic Input"><svg class="icon" viewBox="0 0 32 32"><path class="s" d="M7 4v14M0 11h14"/><path class="f" fill-rule="evenodd" d="M12 20h20v8H12zM14 22v4h2v-4z"/></svg></button>
        <button class="mode" aria-label="Lineweight"><svg class="icon" viewBox="0 0 32 32"><path class="f" d="M0 3h32v2H16v2H0zM0 11h32v2H16v4H0zM0 21h32v2H16v7H0z"/></svg></button>
        <button class="mode on" aria-label="Transparency"><svg class="icon" viewBox="0 0 32 32"><path class="sw" d="M3 2h26v28H3z"/><path class="checks" d="M6 8h20M6 16h20M6 24h20"/><path class="checks" stroke-dashoffset="4" d="M6 12h20M6 20h20"/></svg></button>
        <button class="mode on" aria-label="Selection Cycling"><svg class="icon" viewBox="0 0 32 32"><path class="sw" d="M6 2H2v26h4M22 2h4v10M8 6h9v8H8z"/><circle class="sw" cx="12" cy="21" r="4"/><path class="fw" d="M19 13l12 13-5 1 2 5-4 0-2-4-3 3z"/></svg></button>
        <button class="mode on" aria-label="Object Snap Tracking"><svg class="icon" viewBox="0 0 32 32"><path class="sw" d="M23 4L4 27h28"/><path class="fw" d="M11 14l8 0 0 7-7 0z"/></svg></button>
        <button class="mode" aria-label="Object Snap"><svg class="icon" viewBox="0 0 32 32"><path class="s" d="M12 5h19v26H5V13"/><path class="so" d="M1 1h7v8H1z"/></svg></button>
        <button class="mode on" aria-label="Annotation Visibility"><svg class="icon" viewBox="0 0 32 32"><path class="fw" d="M14 1l4 14 2 6 8 10-8-2-3-5h-5l-3 5-9 2 9-10 2-6z"/><circle class="fw kb" cx="26" cy="8" r="7"/></svg></button>
        <button class="mode" aria-label="Annotation Autoscale"><svg class="icon" viewBox="0 0 32 32"><use href="#needle" x="-2"/><path class="fy ko" d="M28 2l-9 8h5l-3 6 11-8h-5z"/></svg></button>
        <button class="mode" aria-label="Annotation Scale"><svg class="icon" viewBox="0 0 32 32"><use href="#needle"/></svg></button>
        <button class="scale">1:1<span class="caret"></span></button>
        <button class="mode" aria-label="Isolate Objects"><svg class="icon" viewBox="0 0 32 32"><path class="s" d="M1 1h11v12H1zM13 19l6 12H6z"/><circle class="s" cx="25" cy="13" r="6"/></svg></button>
        <button class="mode" aria-label="Settings"><svg class="icon" viewBox="0 0 32 32"><use href="#gear"/></svg></button>
      </div>
    </footer>
  </main>
</div>
<script src="scene.js"></script>
</body>
</html>
```
FILE: styles.css
```css
:root {
  --panel: #3c4454;
  --side: #3d4451;
  --line: #23282f;
  --active: #4e5a6e;
  --toggle: #6890bf;
  --ink: #dadada;
  --muted: #a9abae;
  --blue: #8ac4fb;
}
* { box-sizing: border-box; }
body { margin: 0; background: var(--line); color: #e6e6e6; font: 22px "Open Sans", "Noto Sans", sans-serif; }
button { border: 0; padding: 0; margin: 0; background: none; color: inherit; font: inherit; display: flex; align-items: center; justify-content: center; }
p, h2 { margin: 0; }
.defs { position: absolute; width: 0; height: 0; }
svg { display: block; overflow: visible; }
.icon { width: 32px; height: 32px; }
.plus { width: 22px; height: 22px; }
.chev { width: 14px; height: 12px; }

/* icon paints */
.s, .sw, .sb, .sg, .sk, .st, .sy, .so, .sblu, .sgr, .sw3, .sb3, .st3 { fill: none; stroke-width: 2; }
.s { stroke: var(--ink); }
.sw { stroke: #fff; }
.sb { stroke: var(--blue); }
.sg { stroke: #a3a5a8; }
.sk { stroke: #5b5f68; }
.st { stroke: #d0a878; }
.sy { stroke: #fad78a; stroke-width: 3; }
.so { stroke: #f0b088; }
.sblu { stroke: #3f87d6; }
.sgr { stroke: #86d694; }
.sw3 { stroke: #fff; stroke-width: 3; }
.sb3 { stroke: var(--blue); stroke-width: 3; }
.st3 { stroke: #d0a878; stroke-width: 4; }
.f { fill: var(--ink); }
.fw { fill: #f6f6f6; }
.fb { fill: var(--blue); }
.fy { fill: #fad78a; }
.fg { fill: #86d694; }
.fr { fill: #ef7272; }
.ft { fill: #d0a878; }
.fk { fill: var(--panel); }
.fg2 { fill: #b9b9b9; }
.fg3 { fill: #9a9a9a; }
.fred { fill: #e23b2e; }
.fgreen { fill: #46a832; }
.fd { fill: #6f7480; }
.fdb { fill: #54749a; }
.ko { stroke: var(--panel); stroke-width: 2; paint-order: stroke; }
.kb { stroke: var(--toggle); stroke-width: 2; }
.dots { stroke: var(--ink); stroke-width: 4; stroke-dasharray: 4 6; fill: none; }
.checks { stroke: #fff; stroke-width: 4; stroke-dasharray: 4 4; fill: none; }
.glyph { font-family: Inter, sans-serif; text-anchor: middle; fill: var(--ink); font-weight: 500; }
.glyph.bold { font-weight: 600; }
.glyph.white { fill: #fff; }
.glyph.blue { fill: var(--blue); font-weight: 600; }

.app { display: grid; grid-template: 70px minmax(0, 1fr) / 180px minmax(0, 1fr); gap: 2px; height: 100vh; }
.toolbar { grid-column: 1 / -1; background: var(--panel); display: flex; align-items: center; justify-content: center; gap: 130px; padding: 2px 10px 0 0; }
.group { display: flex; gap: 34px; }
.tool { position: relative; width: 32px; height: 32px; }
.badge { position: absolute; right: -6px; top: -5px; width: 20px; height: 20px; border-radius: 50%; border: 2px solid #fff; background: #e9763f; }
.fly::after { content: ""; position: absolute; right: -6px; bottom: -6px; width: 8px; height: 8px; background: #a0a0a0; clip-path: polygon(100% 0, 100% 100%, 0 100%); }

.palette { background: var(--side); display: flex; flex-direction: column; min-height: 0; }
.palette-tabs { display: flex; height: 44px; }
.ptab { width: 67px; border-right: 2px solid var(--line); }
.ptab.dark { background: #30333e; box-shadow: 0 2px 0 var(--line); }
.ptab.narrow { flex: 1; border-right: 0; box-shadow: 0 2px 0 var(--line); }
.sections { flex: 1; min-height: 0; overflow: hidden; padding: 0 8px; }
.section { border-top: 2px solid var(--line); padding-bottom: 26px; }
.section:first-child { border-top-color: transparent; }
.section:first-child .head { height: 44px; }
.head { height: 46px; margin-bottom: 10px; display: flex; justify-content: space-between; align-items: center; font: 20px "Liberation Sans", Arial, sans-serif; color: #f2f2f2; }
.fold { gap: 9px; -webkit-text-stroke: .4px #f2f2f2; }
.tri { width: 17px; height: 9px; background: #f0f0f0; clip-path: polygon(0 0, 100% 0, 50% 100%); }
.cog { width: 18px; height: 18px; margin-right: 3px; }
.cog svg { width: 18px; height: 18px; }
.grid { display: grid; grid-template-columns: repeat(3, 32px); gap: 32px 28px; margin: 0 6px; }
.palette-foot { height: 46px; display: flex; align-items: center; gap: 28px; padding-left: 26px; background: var(--side); }

.main { display: flex; flex-direction: column; gap: 2px; padding-bottom: 2px; min-height: 0; }
.filetabs { display: flex; gap: 2px; height: 44px; }
.ftab { background: var(--panel); }
.ftab.home { width: 46px; }
.ftab.add { width: 45px; }
.ftab.doc { width: 256px; background: var(--active); justify-content: flex-start; padding-left: 6px; color: #fff; font: 22px "Liberation Sans", Arial, sans-serif; -webkit-text-stroke: .5px #fff; }
.ftab.collapse { width: 48px; }
.rest { flex: 1; background: var(--panel); }
.work { flex: 1; display: flex; min-height: 0; }
.canvas { flex: 1; position: relative; background: #212830; overflow: hidden; min-width: 0; }
.scene { width: 100%; height: 100%; }
.dock { width: 48px; padding-left: 3px; display: flex; flex-direction: column; gap: 2px; padding-bottom: 3px; }
.docktab { flex: 1; background: #30333f; writing-mode: vertical-rl; transform: rotate(180deg); color: #d2d2d4; font: 24px Inter, sans-serif; padding: 8px 0 0 8px; }

.minor { stroke: #262d38; stroke-width: 2; }
.major { stroke: #2e3544; stroke-width: 2; }
.axis-y { stroke: #23662a; stroke-width: 2; fill: none; }
.axis-x { stroke: #5c2429; stroke-width: 2; fill: none; }
#model path { fill: none; stroke-width: 1; shape-rendering: crispEdges; }
.ucs path { fill: none; stroke: #fff; }
.ucs text { font: 200 33px Inter, sans-serif; fill: #eee; text-anchor: middle; }
.cursor path { fill: none; stroke-width: 1; }

.viewlabel { position: absolute; left: 24px; top: 10px; display: flex; align-items: center; color: #9c9c9c; font: 600 23px "Noto Sans", "Open Sans", sans-serif; line-height: 28px; }
.vbtn.bar { border-left: 2px solid #8e8e8e; margin-left: 16px; padding-left: 12px; line-height: 26px; }
.vbtn:first-child { font-weight: 400; width: 22px; }

.viewcube { position: absolute; right: 31px; top: 88px; display: flex; flex-direction: column; align-items: center; }
.viewcube > svg { width: 270px; height: 220px; }
.ring { fill: #6c7077; opacity: .93; stroke: #565b63; stroke-width: 1; }
.compass { font: bold 40px "Liberation Sans", Arial, sans-serif; fill: #d0d0d0; stroke: #444; stroke-width: 1; text-anchor: middle; dominant-baseline: central; }
.top { fill: #d8dada; }
.edge { fill: none; stroke: #444; stroke-dasharray: 14 2 4 2; }
.hot { fill: #b9bdca; opacity: .7; }
.facetext { font: bold 15px "Liberation Sans", Arial, sans-serif; fill: #50545c; text-anchor: middle; dominant-baseline: central; }
.wcs { margin-top: 33px; height: 24px; border-radius: 7px; padding: 0 9px; gap: 16px; background: #94a4ab; color: #23282f; font: 21px Inter, sans-serif; }
.wcs svg { width: 20px; height: 12px; }
.wcs path { fill: #b5d5dc; stroke: #23282f; stroke-width: 1; }

.command { position: absolute; bottom: 2px; left: 50%; width: 994px; transform: translateX(-50%); display: grid; grid-template: 94px 46px / 76px 1fr; gap: 2px; color: #bfc1c5; font-size: 20px; }
.log { grid-column: 2; background: var(--panel); position: relative; padding: 6px 8px 0; line-height: 30px; white-space: pre; }
.thumb { position: absolute; right: 9px; bottom: 2px; width: 8px; height: 40px; border-radius: 4px; background: #9b9b9b; }
.prompt, .entry { background: var(--panel); }
.prompt svg { width: 44px; height: 24px; }
.entry { display: flex; align-items: center; padding: 0 8px; }
.entry input { flex: 1; border: 0; padding: 0; background: none; outline: 0; color: inherit; font: inherit; font-size: 23px; }
.entry input::placeholder { color: #9b9ea4; font-style: italic; opacity: 1; }
.caret { width: 12px; height: 8px; background: #a8a8a8; clip-path: polygon(0 0, 100% 0, 50% 100%); }

.status { height: 44px; display: flex; gap: 2px; }
.ltab { width: 116px; background: var(--panel); color: #aeb0b4; }
.ltab.on { width: 118px; background: var(--active); color: #fff; font-weight: 600; }
.ltab.add { width: 44px; }
.modes { display: flex; align-items: center; gap: 4px; background: var(--panel); padding: 0 10px 0 28px; }
.coords { width: 214px; margin-right: 3px; color: #c8c8c8; white-space: nowrap; font: 22px "DejaVu Sans", sans-serif; }
.mode { width: 40px; height: 40px; }
.mode.on { background: var(--toggle); }
.scale { width: 60px; gap: 12px; color: #c0c0c0; }
```
FILE: scene.js
```js
(() => {
  const NS = 'http://www.w3.org/2000/svg';

  function add(parent, d, attrs) {
    const p = document.createElementNS(NS, 'path');
    p.setAttribute('d', d);
    for (const k in attrs) p.setAttribute(k, attrs[k]);
    parent.appendChild(p);
  }

  /* Ground grid: two families of parallel lines, every fifth one heavier. */
  const lattice = document.getElementById('lattice');
  const yMin = 118, yMax = 1752;
  const families = [
    { slope: 0.5427, start: 370, step: 369.8, from: -10, to: 8 },
    { slope: -0.4314, start: 405, step: 415.1, from: -2, to: 16 }
  ];
  for (const cls of ['minor', 'major']) {
    let d = '';
    for (const f of families) {
      for (let i = f.from * 5; i < f.to * 5; i++) {
        if ((i % 5 === 0) !== (cls === 'major')) continue;
        const x = f.start + f.step * i / 5;
        d += `M${x.toFixed(1)} ${yMin}L${(x + (yMax - yMin) / f.slope).toFixed(1)} ${yMax}`;
      }
    }
    add(lattice, d, { class: cls });
  }

  /* Model: upright prisms given by their top outline and height, plus loose edges. */
  const model = document.getElementById('model');
  const white = '#e4e4e4', blue = '#0a0af0', green = '#00dc00', yellow = '#f0f000', red = '#f01010';

  function prism(pts, h, stroke) {
    const ring = dy => 'M' + pts.map(([x, y]) => `${x} ${y + dy}`).join('L') + 'z';
    const ups = pts.map(([x, y]) => `M${x} ${y}v${h}`).join('');
    add(model, ring(0) + ring(h) + ups, { stroke });
  }
  function edges(d) { add(model, d, { stroke: white }); }

  /* floor slab */
  edges('M1052 1090V1110L1420 1310L1997 1060V1042M1420 1290V1310M1053 1090L1420 1290L1997 1042L1630 842z');
  edges('M1054 1091L1420 1291L1997 1043L1630 843z');

  /* columns */
  prism([[1052, 800], [1076, 793], [1095, 803], [1075, 812]], 290, white);
  prism([[1332, 683], [1352, 672], [1371, 683], [1351, 693]], 289, white);
  prism([[1230, 895], [1248, 886], [1267, 896], [1247, 905]], 290, white);
  prism([[1402, 988], [1422, 980], [1441, 991], [1420, 998]], 290, white);
  prism([[1505, 777], [1527, 766], [1545, 777], [1525, 787]], 290, white);
  prism([[1608, 563], [1630, 552], [1649, 564], [1626, 573]], 290, white);
  prism([[1678, 870], [1698, 860], [1717, 870], [1696, 880]], 290, white);
  prism([[1783, 656], [1803, 648], [1821, 659], [1801, 666]], 290, white);
  prism([[1954, 750], [1977, 742], [1997, 752], [1975, 761]], 290, white);

  /* walls */
  edges('M1054 799L1630 552L1859 677V967M1054 800V1090M1074 811V1101M1422 998V1278M1628 573V863M1353 672V961M1803 649V938M1995 753V1043M1977 742V1032');
  edges('M1095 803L1362 689V978L1095 1093M1362 689L1512 771V1060L1362 978');
  edges('M1381 680V972L1514 1044V754L1381 680L1626 574V864L1381 972');
  edges('M1514 754L1700 675L1715 682V972L1512 1060M1512 771L1715 682M1514 1044L1700 964');
  edges('M1626 574L1763 648V938L1626 864M1763 648L1755 652M1755 652L1769 660L1776 656L1833 686L1859 677M1769 660V950L1776 946V656M1833 686V976L1859 967M1776 946L1833 976M1769 950L1630 861');
  edges('M1899 722L1925 712L1997 752M1899 722L1951 750V1040L1899 1012L1925 1002V712M1925 1002L1997 1042M1951 750L1742 840V1130L1951 1040');
  edges('M1997 752L1420 998M1742 840L1698 816L1690 819L1735 843L1402 986M1690 819V1108L1735 1132V843M1698 816V1106L1742 1130M1690 1108L1698 1106M1735 1132L1422 1270');
  edges('M1054 799L1075 811M1402 986L1420 996M1402 1279L1420 1288');

  /* shelves, windows and doors */
  prism([[1446, 983], [1702, 874], [1735, 893], [1481, 1000]], 77, green);
  prism([[1442, 1146], [1698, 1036], [1735, 1056], [1481, 1167]], 68, green);
  prism([[1700, 675], [1755, 652], [1759, 654], [1704, 677]], 290, yellow);
  prism([[1833, 686], [1837, 684], [1905, 720], [1899, 723]], 290, red);
  prism([[1076, 812], [1081, 810], [1233, 893], [1229, 895]], 290, blue);
  prism([[1081, 818], [1085, 816], [1229, 895], [1225, 898]], 278, blue);
  prism([[1247, 905], [1250, 903], [1403, 986], [1399, 989]], 290, blue);
  prism([[1250, 912], [1255, 909], [1401, 989], [1396, 991]], 277, blue);
})();
```
